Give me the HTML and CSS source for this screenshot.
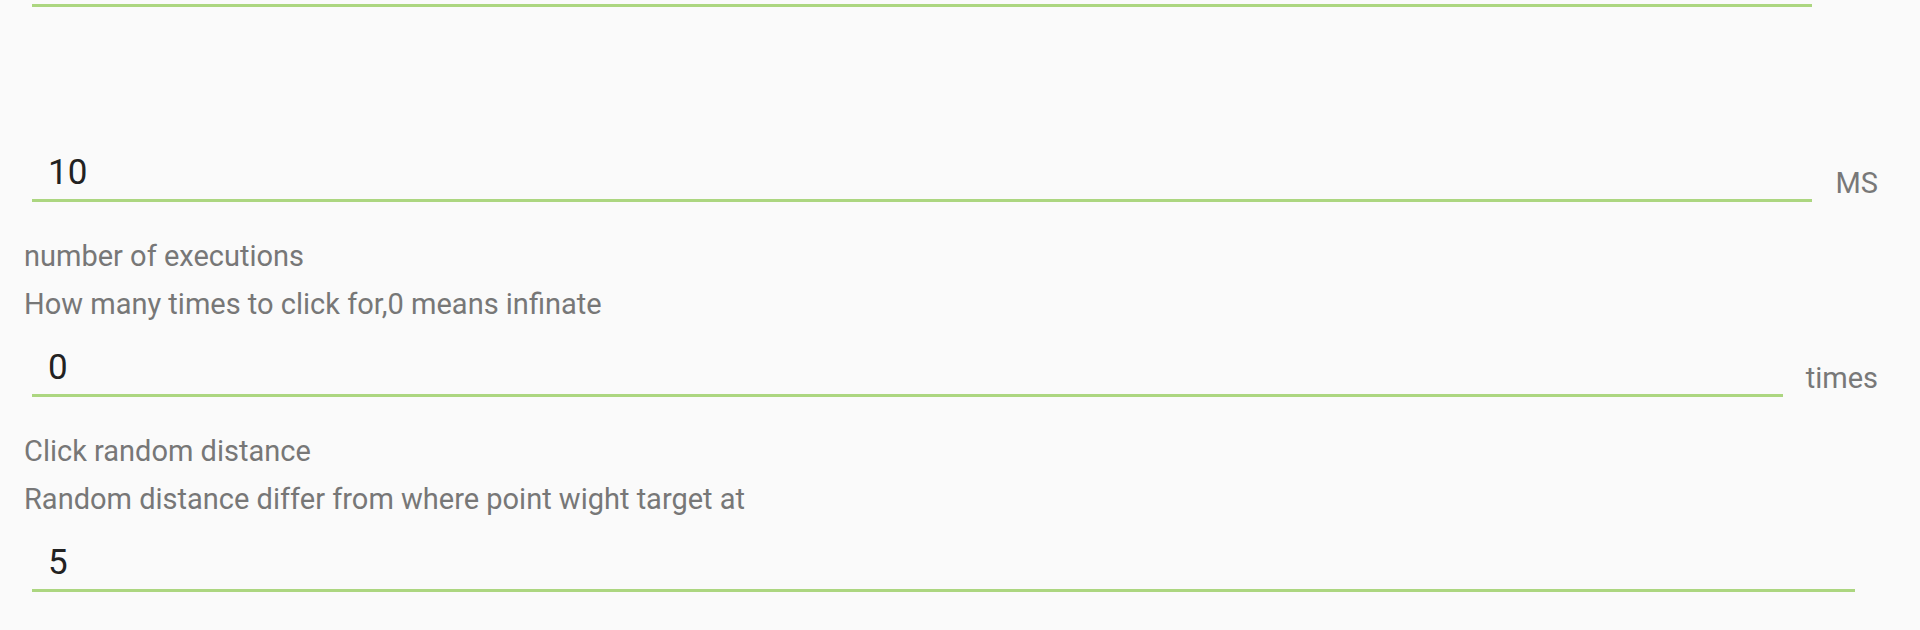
FILE: index.html
```html
<!DOCTYPE html>
<html lang="en">
<head>
<meta charset="utf-8">
<title>Click settings</title>
<link rel="stylesheet" href="styles.css">
</head>
<body>
<main class="form">
  <section class="field field--first">
    <div class="row row--top">
      <div class="input"></div>
    </div>
  </section>

  <section class="field">
    <div class="labels labels--faded"></div>
    <div class="row">
      <div class="input">10</div>
      <span class="unit">MS</span>
    </div>
  </section>

  <section class="field">
    <div class="labels">
      <p class="label">number of executions</p>
      <p class="label">How many times to click for,0 means infinate</p>
    </div>
    <div class="row">
      <div class="input">0</div>
      <span class="unit">times</span>
    </div>
  </section>

  <section class="field">
    <div class="labels">
      <p class="label">Click random distance</p>
      <p class="label">Random distance differ from where point wight target at</p>
    </div>
    <div class="row row--nounit">
      <div class="input">5</div>
    </div>
  </section>
</main>
</body>
</html>
```

FILE: styles.css
```css
html, body {
  margin: 0;
  padding: 0;
  background: #fafafa;
  height: 100%;
  overflow: hidden;
}

body {
  font-family: Roboto, "Noto Sans", "Liberation Sans", sans-serif;
  color: #212121;
}

.form {
  margin-top: -43px;
  display: flex;
  flex-direction: column;
}

.field {
  margin-top: 30px;
}

.field--first {
  margin-top: 0;
}

.labels {
  height: 96px;
  margin-bottom: 19px;
  padding-left: 24px;
}

.label {
  margin: 0;
  font-size: 29px;
  line-height: 48px;
  color: #777777;
  white-space: nowrap;
}

.row {
  display: flex;
  align-items: flex-end;
  padding: 0 42px 0 32px;
}

.row--top {
  padding-right: 108px;
}

.row--nounit {
  padding-right: 65px;
}

.input {
  flex: 1;
  height: 42px;
  padding: 0 0 5px 16px;
  border-bottom: 3px solid #acd680;
  font-size: 35px;
  line-height: 42px;
  color: #222222;
}

.unit {
  margin-left: 23px;
  padding-bottom: 2px;
  font-size: 29px;
  line-height: 34px;
  color: #787878;
}
```
